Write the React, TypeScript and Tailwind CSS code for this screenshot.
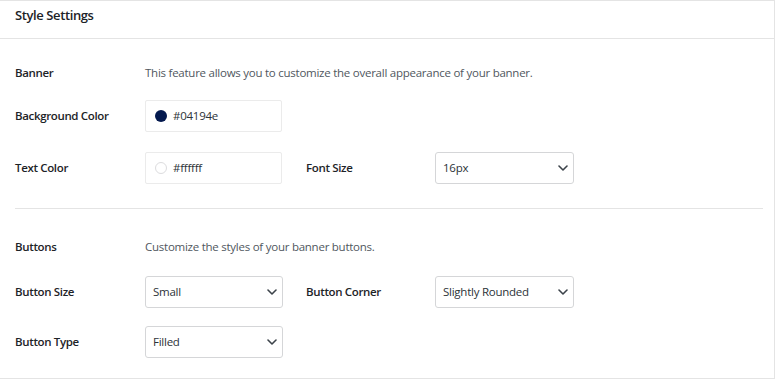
import React from "react";

const Chevron = () => (
  <svg width="10" height="6" viewBox="0 0 10 6" fill="none" className="shrink-0">
    <path d="M1 1l4 4 4-4" stroke="#3c434a" strokeWidth="1.6" strokeLinecap="round" strokeLinejoin="round" />
  </svg>
);

const Select = ({ value, w }: { value: string; w: string }) => (
  <div className={`${w} h-[32px] flex items-center justify-between pl-[7px] pr-[5px] border border-[#d5d6d8] rounded-[3px] bg-white text-[11.5px] tracking-[-0.25px] text-[#2c3338]`}>
    <span>{value}</span>
    <Chevron />
  </div>
);

const ColorInput = ({ color, value, light }: { color: string; value: string; light?: boolean }) => (
  <div className="w-[137px] h-[32px] flex items-center pl-[9px] border border-[#ebebeb] rounded-[2px] bg-white text-[11.5px] tracking-[-0.25px] text-[#2c3338]">
    <span
      className={`w-[12px] h-[12px] rounded-full mr-[6px] ${light ? "border border-[#dcdcde]" : ""}`}
      style={{ backgroundColor: color }}
    />
    <span>{value}</span>
  </div>
);

const Label = ({ children, w = "w-[130px]" }: { children: React.ReactNode; w?: string }) => (
  <div className={`${w} shrink-0 text-[11.5px] tracking-[-0.35px] font-semibold text-[#1d2327]`}>{children}</div>
);

export default function App() {
  return (
    <div
      className="w-[775px] h-[379px] bg-white border-t border-r border-b border-[#e4e4e4] flex flex-col"
      style={{ fontFamily: '"Open Sans", "Noto Sans", sans-serif' }}
    >
      <div className="h-[38px] border-b border-[#e4e4e4] pl-[15px] pt-[4px]">
        <div className="text-[13px] leading-[20px] tracking-[-0.4px] font-semibold text-[#1d2327]">Style Settings</div>
      </div>
      <div className="flex flex-col pl-[15px]">
        <div className="mt-[24px] h-[20px] flex items-center">
          <Label>Banner</Label>
          <div className="text-[11.5px] tracking-[-0.25px] text-[#50575e]">
            This feature allows you to customize the overall appearance of your banner.
          </div>
        </div>
        <div className="mt-[17px] h-[32px] flex items-center">
          <Label>Background Color</Label>
          <ColorInput color="#04194e" value="#04194e" />
        </div>
        <div className="mt-[20px] h-[32px] flex items-center">
          <Label>Text Color</Label>
          <ColorInput color="#ffffff" value="#ffffff" light />
          <div className="ml-[24px] flex items-center">
            <Label w="w-[129px]">Font Size</Label>
            <Select value="16px" w="w-[139px]" />
          </div>
        </div>
        <div className="mt-[24px] mr-[11px] h-px bg-[#e4e4e4]" />
        <div className="mt-[28px] h-[20px] flex items-center">
          <Label>Buttons</Label>
          <div className="text-[11.5px] tracking-[-0.25px] text-[#50575e]">Customize the styles of your banner buttons.</div>
        </div>
        <div className="mt-[19px] h-[32px] flex items-center">
          <Label>Button Size</Label>
          <Select value="Small" w="w-[138px]" />
          <div className="ml-[23px] flex items-center">
            <Label w="w-[129px]">Button Corner</Label>
            <Select value="Slightly Rounded" w="w-[139px]" />
          </div>
        </div>
        <div className="mt-[18px] h-[32px] flex items-center">
          <Label>Button Type</Label>
          <Select value="Filled" w="w-[138px]" />
        </div>
      </div>
    </div>
  );
}
